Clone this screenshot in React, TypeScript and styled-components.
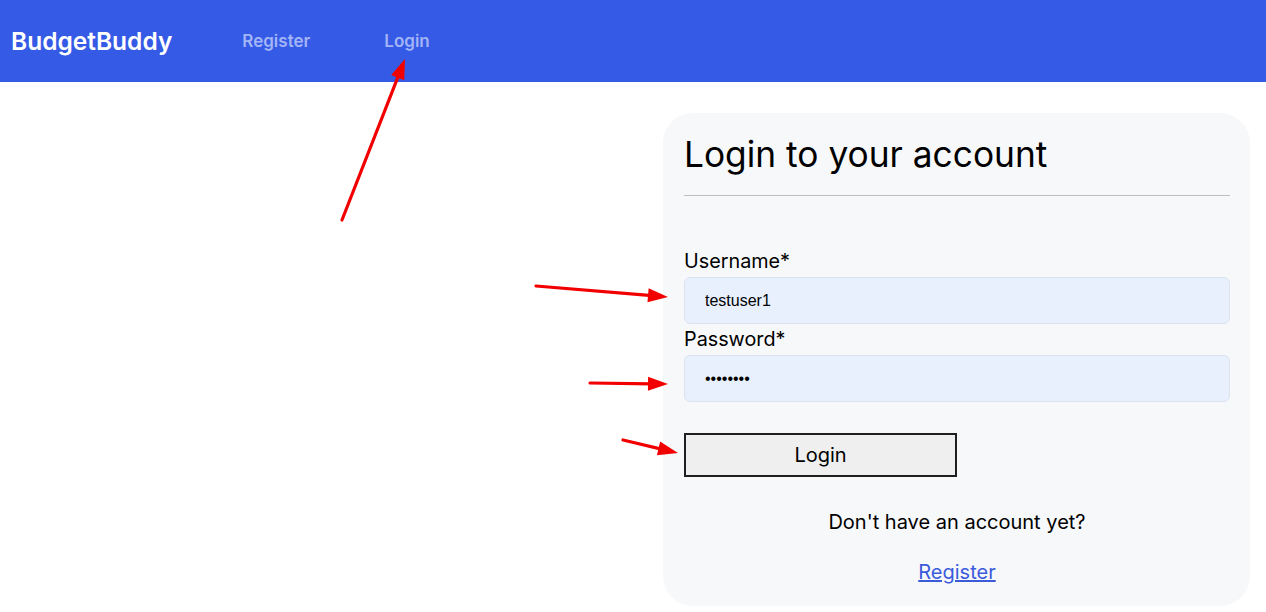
import React from "react";
import styled, { createGlobalStyle } from "styled-components";

const Global = createGlobalStyle`
  html, body { margin: 0; padding: 0; background: #ffffff; }
  body { font-family: Inter, "Noto Sans", sans-serif; color: #000; }
  * { box-sizing: border-box; }
`;

const Page = styled.div`
  position: relative;
  width: 1266px;
  height: 612px;
  overflow: hidden;
`;

const Header = styled.header`
  height: 82px;
  background: #355ae6;
  display: flex;
  align-items: center;
  padding: 0 11px;
`;

const Brand = styled.div`
  font-size: 24.5px;
  font-weight: 600;
  color: #ffffff;
  margin-right: 70px;
`;

const Nav = styled.nav`
  display: flex;
  gap: 74px;
`;

const NavLink = styled.a`
  font-size: 17px;
  font-weight: 600;
  color: #a3b5f6;
  text-decoration: none;
`;

const Main = styled.main`
  display: flex;
  justify-content: flex-end;
  padding: 31px 16px 0 0;
`;

const Card = styled.section`
  width: 587px;
  height: 493px;
  background: #f7f8fa;
  border-radius: 30px;
  padding: 21px 20px 0 21px;
  display: flex;
  flex-direction: column;
`;

const Title = styled.h1`
  margin: 0;
  font-size: 35.3px;
  font-weight: 400;
  line-height: 42px;
`;

const Rule = styled.hr`
  margin: 19px 0 0;
  border: none;
  border-top: 1px solid #bcbec4;
`;

const Form = styled.form`
  display: flex;
  flex-direction: column;
  margin-top: 52px;
`;

const Label = styled.label`
  font-size: 19.8px;
  line-height: 27px;
  margin-bottom: 2px;
`;

const Input = styled.input`
  height: 47px;
  width: 100%;
  background: #e8f0fe;
  border: 1px solid #dde3ee;
  border-radius: 6px;
  padding: 0 20px;
  font-family: "Liberation Sans", Arial, sans-serif;
  font-size: 16px;
  color: #000;
  margin-bottom: 2px;
  outline: none;
`;

const Button = styled.button`
  margin-top: 29px;
  width: 273px;
  height: 44px;
  background: #efefef;
  border: 2px solid #1f1f1f;
  font-family: Inter, sans-serif;
  font-size: 20px;
  color: #000;
  align-self: flex-start;
`;

const Prompt = styled.p`
  margin: 32px 0 0;
  text-align: center;
  font-size: 20px;
  line-height: 26px;
`;

const RegLink = styled.a`
  margin-top: 24px;
  align-self: center;
  font-size: 20px;
  line-height: 26px;
  color: #3b5bdb;
  text-decoration: underline;
`;

const Arrows = styled.svg`
  position: absolute;
  left: 0;
  top: 0;
  pointer-events: none;
`;

const Arrow = ({ x1, y1, x2, y2 }: { x1: number; y1: number; x2: number; y2: number }) => {
  const a = Math.atan2(y2 - y1, x2 - x1);
  const L = 20, W = 7;
  const bx = x2 - L * Math.cos(a), by = y2 - L * Math.sin(a);
  const px = -Math.sin(a) * W, py = Math.cos(a) * W;
  const sx = x2 - (L - 4) * Math.cos(a), sy = y2 - (L - 4) * Math.sin(a);
  return (
    <g>
      <line x1={x1} y1={y1} x2={sx} y2={sy} stroke="#f20000" strokeWidth={3.2} strokeLinecap="round" />
      <polygon points={`${x2},${y2} ${bx + px},${by + py} ${bx - px},${by - py}`} fill="#f20000" />
    </g>
  );
};

export default function App() {
  return (
    <Page>
      <Global />
      <Header>
        <Brand>BudgetBuddy</Brand>
        <Nav>
          <NavLink href="#">Register</NavLink>
          <NavLink href="#">Login</NavLink>
        </Nav>
      </Header>
      <Main>
        <Card>
          <Title>Login to your account</Title>
          <Rule />
          <Form onSubmit={(e) => e.preventDefault()}>
            <Label>Username*</Label>
            <Input type="text" defaultValue="testuser1" />
            <Label>Password*</Label>
            <Input type="password" defaultValue="testpass" />
            <Button type="submit">Login</Button>
          </Form>
          <Prompt>Don't have an account yet?</Prompt>
          <RegLink href="#">Register</RegLink>
        </Card>
      </Main>
      <Arrows width={1266} height={612}>
        <Arrow x1={342} y1={220} x2={405} y2={59} />
        <Arrow x1={536} y1={286} x2={668} y2={297} />
        <Arrow x1={590} y1={383} x2={668} y2={384} />
        <Arrow x1={623} y1={440} x2={678} y2={453} />
      </Arrows>
    </Page>
  );
}
